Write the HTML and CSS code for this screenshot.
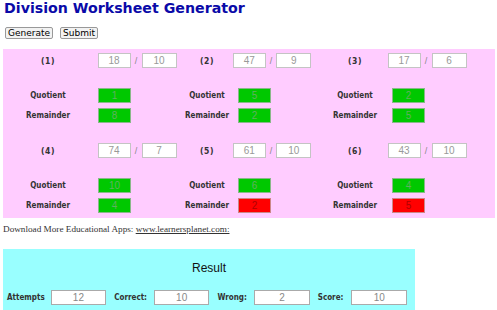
FILE: index.html
```
<!DOCTYPE html>
<html lang="en">

<head>
  <meta charset="UTF-8">
  <title>Division Worksheet Generator</title>
  <link rel="stylesheet" href="styles.css">
</head>

<body>
  <h1 class="title">Division Worksheet Generator</h1>
  <div class="toolbar">
    <button type="button">Generate</button>
    <button type="button">Submit</button>
  </div>

  <div class="sheet">
    <div class="set">
      <div class="num">(1)</div>
      <div class="pair"><span class="box">18</span><span class="slash">/</span><span class="box wide">10</span></div>
      <div class="num">(2)</div>
      <div class="pair"><span class="box">47</span><span class="slash">/</span><span class="box wide">9</span></div>
      <div class="num shift">(3)</div>
      <div class="pair"><span class="box">17</span><span class="slash">/</span><span class="box wide">6</span></div>

      <div class="lbl">Quotient</div>
      <div class="ans"><span class="box ok">1</span></div>
      <div class="lbl">Quotient</div>
      <div class="ans"><span class="box ok">5</span></div>
      <div class="lbl shift">Quotient</div>
      <div class="ans"><span class="box ok">2</span></div>

      <div class="lbl">Remainder</div>
      <div class="ans"><span class="box ok">8</span></div>
      <div class="lbl">Remainder</div>
      <div class="ans"><span class="box ok">2</span></div>
      <div class="lbl shift">Remainder</div>
      <div class="ans"><span class="box ok">5</span></div>
    </div>

    <div class="set">
      <div class="num">(4)</div>
      <div class="pair"><span class="box">74</span><span class="slash">/</span><span class="box wide">7</span></div>
      <div class="num">(5)</div>
      <div class="pair"><span class="box">61</span><span class="slash">/</span><span class="box wide">10</span></div>
      <div class="num shift">(6)</div>
      <div class="pair"><span class="box">43</span><span class="slash">/</span><span class="box wide">10</span></div>

      <div class="lbl">Quotient</div>
      <div class="ans"><span class="box ok">10</span></div>
      <div class="lbl">Quotient</div>
      <div class="ans"><span class="box ok">6</span></div>
      <div class="lbl shift">Quotient</div>
      <div class="ans"><span class="box ok">4</span></div>

      <div class="lbl">Remainder</div>
      <div class="ans"><span class="box ok">4</span></div>
      <div class="lbl">Remainder</div>
      <div class="ans"><span class="box bad">2</span></div>
      <div class="lbl shift">Remainder</div>
      <div class="ans"><span class="box bad">5</span></div>
    </div>
  </div>

  <p class="promo">Download More Educational Apps: <a href="#">www.learnersplanet.com:</a></p>

  <div class="result">
    <div class="result-title">Result</div>
    <div class="stats">
      <span class="stat-lbl w-att">Attempts</span><span class="stat-box">12</span>
      <span class="stat-lbl w-cor">Correct:</span><span class="stat-box">10</span>
      <span class="stat-lbl w-wrg">Wrong:</span><span class="stat-box">2</span>
      <span class="stat-lbl w-scr">Score:</span><span class="stat-box">10</span>
    </div>
  </div>
</body>

</html>
```

FILE: styles.css
```
body {
  margin: 0;
  font-family: "DejaVu Sans", Verdana, sans-serif;
  background-color: #fff;
  overflow: hidden;
}

.title {
  margin: 0;
  padding-left: 4px;
  font-size: 14.2px;
  line-height: 16px;
  font-weight: bold;
  color: #0a0aa8;
}

.toolbar {
  display: flex;
  gap: 7px;
  margin-top: 11px;
  padding-left: 5px;
}

.toolbar button {
  font-family: "DejaVu Sans", Verdana, sans-serif;
  font-size: 9px;
  line-height: 10px;
  height: 12px;
  padding: 0 2px;
  border: 1px solid #999;
  border-radius: 2px;
  background-color: #f2f2f2;
  color: #000;
}

.sheet {
  background-color: #ffccff;
  margin: 10px 2px 0 3px;
  padding-bottom: 3px;
}

.set {
  display: grid;
  grid-template-columns: 90px 88px 52px 78px 76px 80px;
  grid-template-rows: 36px 20px 20px;
}

.set + .set {
  margin-top: 14px;
}

.num,
.lbl {
  font-family: "DejaVu Sans Condensed", "DejaVu Sans", sans-serif;
  font-weight: bold;
  font-size: 8px;
  color: #333;
  display: flex;
  align-items: center;
  justify-content: center;
}

.num {
  height: 23px;
  font-size: 8.5px;
  letter-spacing: 0.5px;
}

.shift {
  padding-left: 12px;
}

.pair {
  height: 23px;
  display: flex;
  align-items: center;
  justify-content: center;
}

.ans {
  display: flex;
  align-items: center;
  padding-left: 5px;
}

.box {
  box-sizing: border-box;
  width: 33px;
  height: 15px;
  border: 1px solid #c4c4c4;
  background-color: #fff;
  color: #999;
  font-family: "Liberation Sans", Arial, sans-serif;
  font-size: 10px;
  line-height: 13px;
  text-align: center;
}

.box.wide {
  width: 35px;
}

.slash {
  width: 11px;
  text-align: center;
  font-family: "Liberation Sans", Arial, sans-serif;
  font-size: 9px;
  color: #888;
}

.box.ok {
  background-color: #00c800;
  border-color: #8ab88a;
  color: #5fb05f;
}

.box.bad {
  background-color: #ff0000;
  border-color: #c88;
  color: #b00000;
}

.promo {
  margin: 0;
  padding: 5px 3px;
  font-family: "Liberation Serif", "Times New Roman", serif;
  font-size: 9.2px;
  line-height: 12px;
  color: #333;
}

.promo a {
  color: #333;
}

.result {
  background-color: #99ffff;
  margin: 9px 0 0 3px;
  width: 412px;
  padding: 12px 0 10px;
}

.result-title {
  text-align: center;
  font-family: "Liberation Sans", Arial, sans-serif;
  font-size: 12px;
  line-height: 14px;
  color: #111;
}

.stats {
  display: flex;
  align-items: center;
  margin-top: 15px;
  padding-left: 4px;
}

.stat-lbl {
  font-family: "DejaVu Sans Condensed", "DejaVu Sans", sans-serif;
  font-weight: bold;
  font-size: 8px;
  color: #333;
}

.w-att { width: 44px; }
.w-cor { width: 40px; }
.w-wrg { width: 37px; }
.w-scr { width: 34px; }

.stat-box {
  box-sizing: border-box;
  width: 56px;
  height: 15px;
  margin-right: 8px;
  border: 1px solid #aaa;
  background-color: #fff;
  color: #888;
  font-family: "Liberation Sans", Arial, sans-serif;
  font-size: 10px;
  line-height: 13px;
  text-align: center;
}
```
